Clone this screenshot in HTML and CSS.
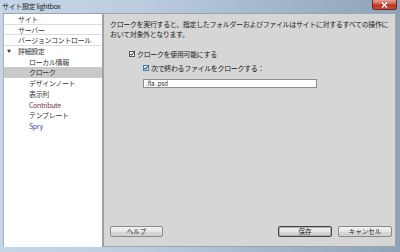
FILE: index.html
```html
<!DOCTYPE html>
<html lang="ja">
<head>
    <meta charset="UTF-8">
    <title>サイト設定 lightbox</title>
    <link rel="stylesheet" href="styles.css">
</head>
<body>
    <div class="window">
        <div class="titlebar">
            <span class="title">サイト設定 lightbox</span>
            <button class="close-btn" type="button">
                <svg width="7" height="6" viewBox="0 0 7 6"><path d="M1 0.5 L6 5.5 M6 0.5 L1 5.5" stroke="#fff" stroke-width="1.3"/></svg>
            </button>
        </div>

        <div class="client">
            <ul class="category-list">
                <li class="cat top">サイト</li>
                <li class="cat top">サーバー</li>
                <li class="cat top">バージョンコントロール</li>
                <li class="cat group"><span class="arrow">▼</span>詳細設定</li>
                <li class="cat sub">ローカル情報</li>
                <li class="cat sub selected">クローク</li>
                <li class="cat sub">デザインノート</li>
                <li class="cat sub">表示列</li>
                <li class="cat sub contribute">Contribute</li>
                <li class="cat sub">テンプレート</li>
                <li class="cat sub spry">Spry</li>
            </ul>

            <div class="panel">
                <p class="desc">クロークを実行すると、指定したフォルダーおよびファイルはサイトに対するすべての操作に<br>おいて対象外となります。</p>

                <div class="options">
                    <label class="check">
                        <svg width="6" height="6" viewBox="0 0 6 6"><rect x="0.5" y="0.5" width="5" height="5" fill="#fff" stroke="#555"/><path d="M1.3 3 L2.5 4.3 L4.8 1.4" fill="none" stroke="#111" stroke-width="1"/></svg>
                        クロークを使用可能にする
                    </label>
                    <label class="check sub-check">
                        <svg width="6" height="6" viewBox="0 0 6 6"><rect x="0.5" y="0.5" width="5" height="5" fill="#e8f2fc" stroke="#3c7fb1"/><path d="M1.3 3 L2.5 4.3 L4.8 1.4" fill="none" stroke="#111" stroke-width="1"/></svg>
                        次で終わるファイルをクロークする：
                    </label>
                    <input class="mask-input" type="text" value=".fla .psd">
                </div>

                <div class="buttons">
                    <button class="btn" type="button">ヘルプ</button>
                    <span class="spacer"></span>
                    <button class="btn default" type="button">保存</button>
                    <button class="btn" type="button">キャンセル</button>
                </div>
            </div>
        </div>
    </div>
</body>
</html>
```

FILE: styles.css
```css
* {
    margin: 0;
    padding: 0;
    box-sizing: border-box;
}

body {
    font-family: "Noto Sans CJK JP", "Noto Sans", sans-serif;
    font-size: 7px;
    letter-spacing: -0.35px;
    color: #222;
    background: #fff;
}

.window {
    width: 400px;
    height: 252px;
    display: flex;
    flex-direction: column;
    background: linear-gradient(to right, #c6d6e8 0%, #bccde0 35%, #a2b5c9 70%, #8fa3b8 100%);
}

.titlebar {
    height: 13px;
    display: flex;
    align-items: flex-start;
    padding-left: 2px;
}

.title {
    font-size: 7px;
    line-height: 13px;
    color: #1e1e1e;
}

.close-btn {
    margin-left: auto;
    margin-right: 3px;
    width: 25px;
    height: 10px;
    border: 1px solid #6b2a22;
    border-top: none;
    border-radius: 0 0 3px 3px;
    background: linear-gradient(to bottom, #e4a092 0%, #d0604c 45%, #b8301c 55%, #c9503a 100%);
    display: flex;
    align-items: center;
    justify-content: center;
}

.client {
    flex: 1;
    display: flex;
    margin: 0 4px 5px 3px;
    border-top: 1px solid #9aa4ae;
}

.category-list {
    list-style: none;
    width: 100px;
    background: #fff;
    border-left: 1px solid #b0b0b0;
    border-right: 1px solid #a0a0a0;
}

.cat {
    height: 10.7px;
    line-height: 10.7px;
    white-space: nowrap;
    color: #333;
}

.cat.top {
    padding-left: 14px;
    border-bottom: 1px solid #dcdcdc;
}

.cat.group {
    padding-left: 3px;
}

.arrow {
    display: inline-block;
    width: 11px;
    font-size: 4px;
    vertical-align: top;
}

.cat.sub {
    padding-left: 25px;
}

.cat.selected {
    background: #c9c9c9;
}

.cat.contribute {
    color: #7d2e4e;
}

.cat.spry {
    color: #4b4b9a;
}

.panel {
    flex: 1;
    display: flex;
    flex-direction: column;
    background: #d6d6d6;
    border: 1px solid #a2a2a2;
    border-top: none;
    padding: 5px 3px 9px 6px;
}

.desc {
    line-height: 10px;
    white-space: nowrap;
    color: #222;
}

.options {
    margin-top: 10px;
    padding-left: 19px;
    display: flex;
    flex-direction: column;
}

.check {
    display: flex;
    align-items: center;
    gap: 2px;
    height: 10px;
    white-space: nowrap;
}

.sub-check {
    margin-top: 4px;
    padding-left: 14px;
}

.mask-input {
    margin-top: 6px;
    margin-left: 14px;
    width: 174px;
    height: 9px;
    border: 1px solid #8e8e8e;
    background: #fff;
    font-family: inherit;
    font-size: 6px;
    padding: 0 2px;
    color: #222;
    outline: none;
}

.buttons {
    margin-top: auto;
    display: flex;
    gap: 6px;
}

.spacer {
    flex: 1;
}

.btn {
    width: 54px;
    height: 11px;
    border: 1px solid #8a8a8a;
    border-radius: 2px;
    background: linear-gradient(to bottom, #f2f2f2 0%, #e6e6e6 50%, #d9d9d9 51%, #cfcfcf 100%);
    font-family: inherit;
    font-size: 6.5px;
    line-height: 9px;
    color: #222;
}

.btn:first-child {
    width: 53px;
    margin-left: 0;
}

.btn.default {
    border-color: #444;
    box-shadow: inset 0 0 0 1px #b0b0b0;
}
```
